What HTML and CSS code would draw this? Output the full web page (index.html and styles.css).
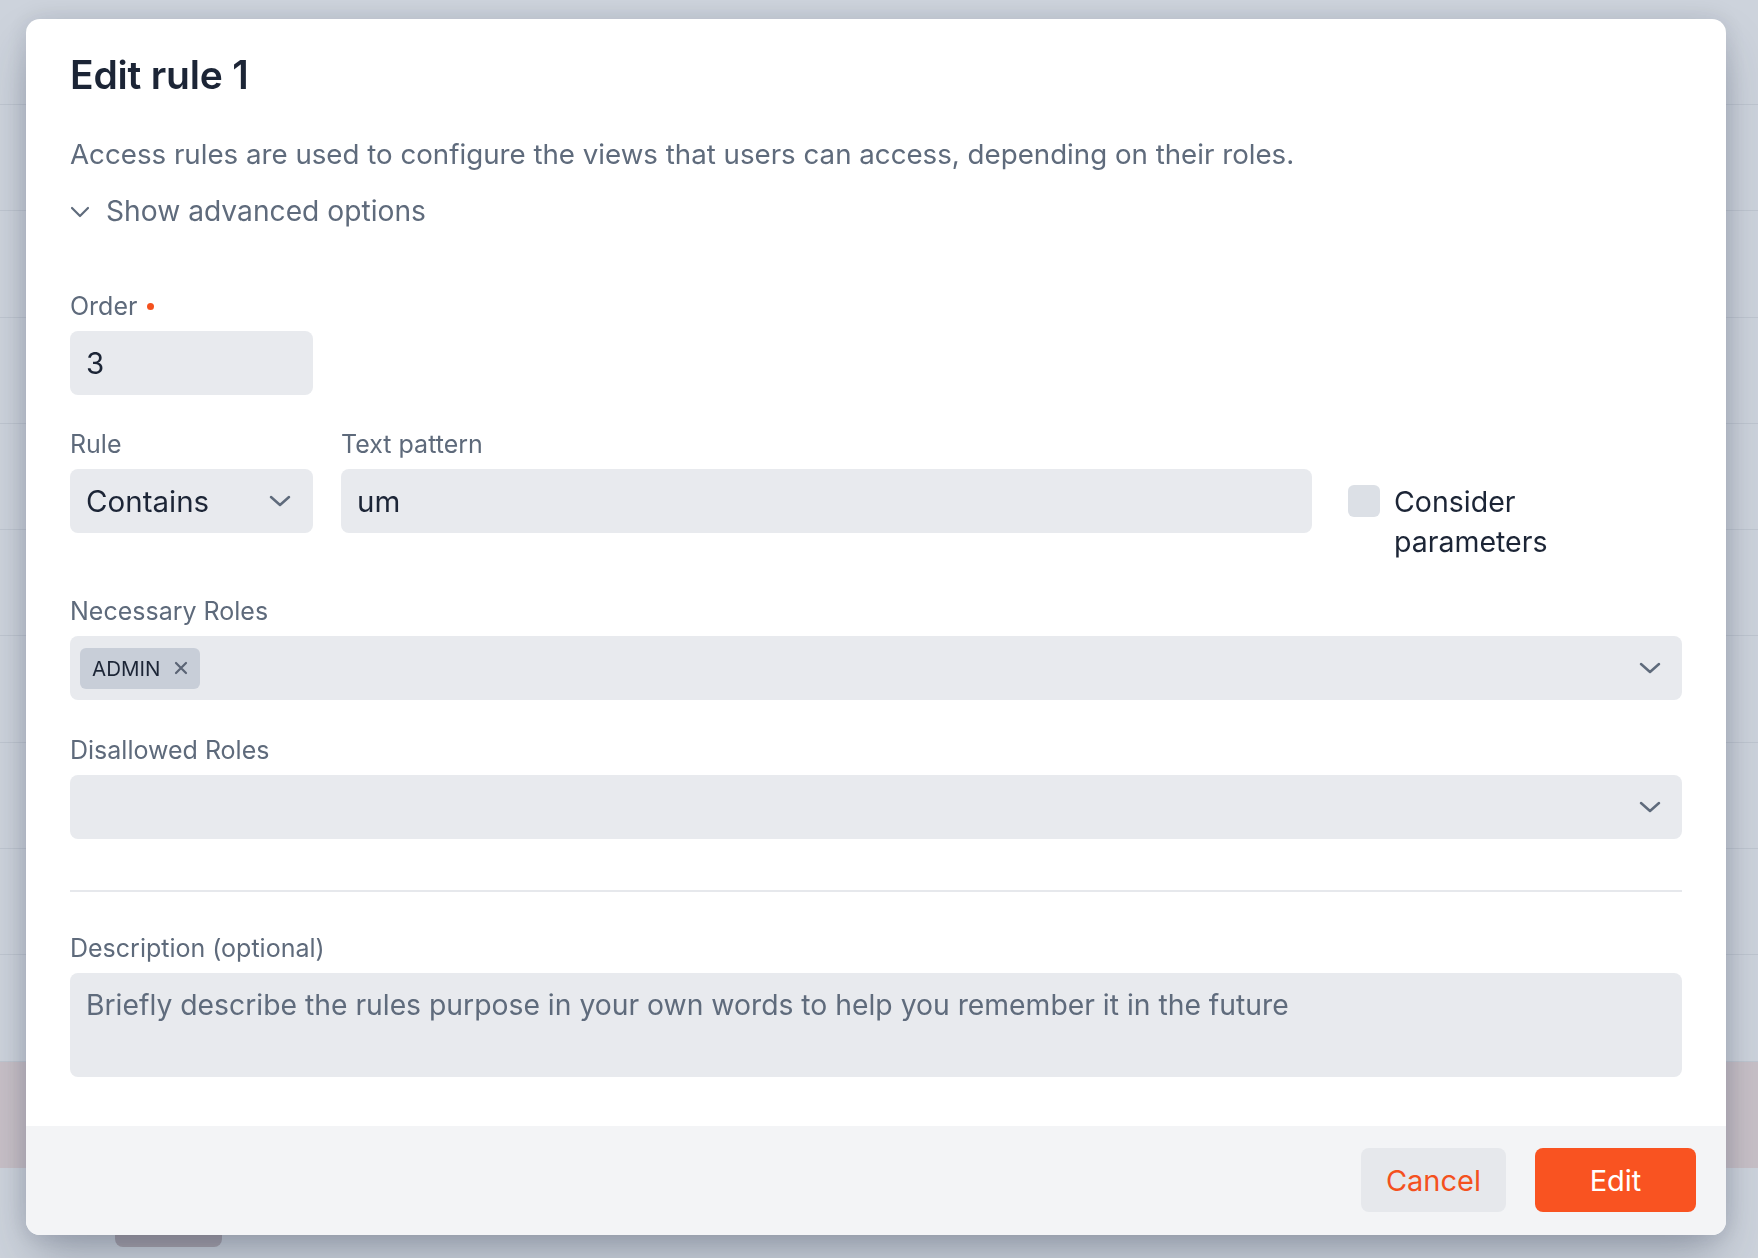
FILE: index.html
```html
<!DOCTYPE html>
<html lang="en">
<head>
    <meta charset="UTF-8">
    <meta name="viewport" content="width=device-width, initial-scale=1.0">
    <title>Access rules - Edit rule 1</title>
    <link rel="stylesheet" href="styles.css">
</head>
<body>
    <!-- page behind the dialog -->
    <div class="bg-list">
        <div class="bg-row"></div>
        <div class="bg-row"></div>
        <div class="bg-row"></div>
        <div class="bg-row"></div>
        <div class="bg-row"></div>
        <div class="bg-row"></div>
        <div class="bg-row"></div>
        <div class="bg-row"></div>
        <div class="bg-row"></div>
        <div class="bg-row"></div>
        <div class="bg-row highlight"></div>
        <div class="bg-row"><span class="bg-badge"></span></div>
    </div>

    <div class="modal-overlay">
        <div class="modal">
            <div class="modal-body">
                <h1 class="modal-title">Edit rule 1</h1>
                <p class="modal-desc">Access rules are used to configure the views that users can access, depending on their roles.</p>
                <div class="advanced-toggle">
                    <svg class="toggle-icon" width="20" height="12" viewBox="0 0 20 12"><path d="M2 2 L10 10 L18 2" fill="none" stroke="#5f6b7c" stroke-width="2.2" stroke-linecap="round" stroke-linejoin="round"/></svg>
                    <span>Show advanced options</span>
                </div>

                <div class="form">
                    <div class="field field-small">
                        <label class="field-label">Order <span class="required-dot"></span></label>
                        <input class="text-input" type="text" value="3">
                    </div>

                    <div class="form-row">
                        <div class="field field-small">
                            <label class="field-label">Rule</label>
                            <div class="select-box">
                                <span>Contains</span>
                                <svg width="22" height="12" viewBox="0 0 22 12"><path d="M2 2 L11 10 L20 2" fill="none" stroke="#5f6b7c" stroke-width="2.5" stroke-linecap="round" stroke-linejoin="round"/></svg>
                            </div>
                        </div>
                        <div class="field field-grow">
                            <label class="field-label">Text pattern</label>
                            <input class="text-input" type="text" value="um">
                        </div>
                        <div class="check-option">
                            <span class="checkbox"></span>
                            <span class="check-text">Consider parameters</span>
                        </div>
                    </div>

                    <div class="field field-gap">
                        <label class="field-label">Necessary Roles</label>
                        <div class="multi-select">
                            <span class="chip">ADMIN
                                <svg width="14" height="14" viewBox="0 0 14 14"><path d="M2 2 L12 12 M12 2 L2 12" stroke="#5b6475" stroke-width="2.2" stroke-linecap="round"/></svg>
                            </span>
                            <svg width="22" height="12" viewBox="0 0 22 12"><path d="M2 2 L11 10 L20 2" fill="none" stroke="#5f6b7c" stroke-width="2.5" stroke-linecap="round" stroke-linejoin="round"/></svg>
                        </div>
                    </div>

                    <div class="field field-gap2">
                        <label class="field-label">Disallowed Roles</label>
                        <div class="multi-select">
                            <span></span>
                            <svg width="22" height="12" viewBox="0 0 22 12"><path d="M2 2 L11 10 L20 2" fill="none" stroke="#5f6b7c" stroke-width="2.5" stroke-linecap="round" stroke-linejoin="round"/></svg>
                        </div>
                    </div>

                    <hr class="divider">

                    <div class="field field-desc">
                        <label class="field-label">Description (optional)</label>
                        <textarea class="text-area" placeholder="Briefly describe the rules purpose in your own words to help you remember it in the future"></textarea>
                    </div>
                </div>
            </div>

            <div class="modal-footer">
                <button class="btn btn-cancel">Cancel</button>
                <button class="btn btn-primary">Edit</button>
            </div>
        </div>
    </div>
</body>
</html>
```

FILE: styles.css
```css
body {
    margin: 0;
    padding: 0;
    font-family: 'Inter', 'Noto Sans', sans-serif;
    background-color: #cdd3dc;
    height: 1258px;
    overflow: hidden;
    color: #1c2536;
}

/* background page */
.bg-list {
    margin-top: -1.3px;
}
.bg-row {
    height: 106.3px;
    box-sizing: border-box;
    border-bottom: 1px solid #bfc6d0;
}
.bg-row.highlight {
    background-color: #c8c0c7;
    border-bottom-color: #c8c0c7;
}
.bg-row .bg-badge {
    display: block;
    margin: 28px 0 0 115px;
    width: 107px;
    height: 51px;
    border-radius: 8px;
    background-color: #aaa5ae;
}

/* dialog */
.modal-overlay {
    position: fixed;
    top: 0;
    left: 0;
    width: 100%;
    height: 100%;
}
.modal {
    margin: 19px 0 0 26px;
    width: 1700px;
    background-color: #fff;
    border-radius: 14px;
    overflow: hidden;
    box-shadow: 0 24px 48px -8px rgba(40, 52, 75, 0.35), 0 0 24px rgba(40, 52, 75, 0.12);
}
.modal-body {
    padding: 32px 44px 49px;
}
.modal-title {
    margin: 0;
    font-size: 39px;
    font-weight: 600;
    line-height: 48px;
    letter-spacing: -0.2px;
    color: #1c2536;
}
.modal-desc {
    margin: 35px 0 0;
    font-size: 27.7px;
    line-height: 40px;
    color: #5f6b7c;
}
.advanced-toggle {
    margin-top: 17px;
    display: flex;
    align-items: center;
    gap: 16px;
    font-size: 28.2px;
    line-height: 40px;
    color: #5f6b7c;
}
.toggle-icon {
    margin-top: 2px;
}

/* form */
.form {
    margin-top: 60px;
}
.field {
    display: flex;
    flex-direction: column;
}
.field-small {
    width: 243px;
}
.field-grow {
    flex: 1;
}
.field-gap {
    margin-top: 34px;
}
.field-gap2 {
    margin-top: 35px;
}
.field-desc {
    margin-top: 41px;
}
.field-label {
    display: flex;
    align-items: center;
    gap: 10px;
    margin-bottom: 10px;
    font-size: 25px;
    line-height: 30px;
    color: #5e6a7b;
}
.required-dot {
    width: 7px;
    height: 7px;
    border-radius: 50%;
    background-color: #f4511e;
}
.text-input,
.select-box,
.multi-select,
.text-area {
    box-sizing: border-box;
    width: 100%;
    height: 64px;
    border: none;
    border-radius: 8px;
    background-color: #e8eaee;
    font-family: 'Inter', 'Noto Sans', sans-serif;
    font-size: 29.5px;
    color: #1c2536;
    outline: none;
}
.text-input {
    padding: 0 16px;
}
.select-box {
    display: flex;
    align-items: center;
    justify-content: space-between;
    padding: 0 22px 0 16px;
}
.form-row {
    display: flex;
    align-items: flex-start;
    gap: 28px;
    margin-top: 34px;
}
.check-option {
    display: flex;
    align-items: flex-start;
    gap: 14px;
    padding-top: 53px;
    margin-left: 8px;
    width: 334px;
}
.checkbox {
    flex-shrink: 0;
    margin-top: 3px;
    width: 32px;
    height: 32px;
    border-radius: 6px;
    background-color: #dce0e6;
}
.check-text {
    width: 200px;
    font-size: 28.5px;
    line-height: 40px;
    color: #1c2536;
}
.multi-select {
    display: flex;
    align-items: center;
    justify-content: space-between;
    padding: 0 21px 0 10px;
}
.chip {
    display: flex;
    align-items: center;
    gap: 14px;
    height: 41px;
    padding: 0 12px;
    border-radius: 6px;
    background-color: #c8ced8;
    font-size: 20.5px;
    color: #1c2536;
}
.divider {
    margin: 51px 0 0;
    border: none;
    height: 2px;
    background-color: #e6e8ec;
}
.text-area {
    display: block;
    height: 104px;
    padding: 12px 16px;
    font-size: 28.3px;
    line-height: 40px;
    resize: none;
}
.text-area::placeholder {
    color: #5f6b7c;
    opacity: 1;
}

/* footer */
.modal-footer {
    display: flex;
    justify-content: flex-end;
    gap: 29px;
    padding: 22px 30px 23px;
    background-color: #f3f4f6;
}
.btn {
    height: 64px;
    border: none;
    border-radius: 8px;
    font-family: 'Inter', 'Noto Sans', sans-serif;
    font-size: 29px;
    font-weight: 400;
    cursor: pointer;
}
.btn-cancel {
    padding: 0 25px;
    background-color: #e6e8ec;
    color: #f4511e;
}
.btn-primary {
    width: 161px;
    background-color: #f95321;
    color: #fff;
}
```
